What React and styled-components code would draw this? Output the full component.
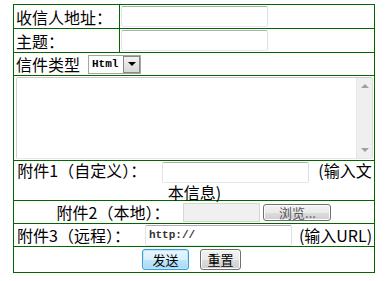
import React from "react";
import styled, { createGlobalStyle } from "styled-components";

const line = "#006600";

const GlobalStyle = createGlobalStyle`
  body {
    margin: 0;
    background: #fff;
    font-family: "Noto Sans CJK SC", sans-serif;
  }
`;

const Form = styled.form`
  box-sizing: border-box;
  width: 362px;
  margin: 4px 0 0 13px;
  border: 1px solid ${line};
  font-size: 16px;
  color: #000;
`;

const Row = styled.div`
  display: flex;
  align-items: center;
  justify-content: ${({ $center }) => ($center ? "center" : "flex-start")};
  height: ${({ $h }) => $h}px;
  border-top: ${({ $first }) => ($first ? "none" : `1px solid ${line}`)};
  padding: ${({ $pad }) => $pad || "0 2px"};
  white-space: nowrap;
`;

const LabelCell = styled.div`
  display: flex;
  align-items: center;
  width: 103px;
  height: 100%;
  padding-left: 2px;
  border-right: 1px solid ${line};
`;

const FieldCell = styled.div`
  display: flex;
  align-items: center;
  height: 100%;
  padding-left: 1px;
`;

const Input = styled.input`
  box-sizing: border-box;
  width: ${({ $w }) => $w || 147}px;
  height: 21px;
  margin: 0 ${({ $mr }) => $mr || 0}px 0 ${({ $ml }) => $ml || 0}px;
  padding: 1px 3px;
  border: 1px solid;
  border-color: #abadb3 #dbdfe6 #e3e9ef #e2e3ea;
  border-radius: 2px;
  background: #fff;
  font-family: "Liberation Mono", monospace;
  font-size: 11px;
  font-weight: bold;
  color: #333;
  vertical-align: middle;
  outline: none;
`;

const Hint = styled.span`
  margin-left: ${({ $ml }) => $ml || 0}px;
`;

const Select = styled.div`
  display: inline-flex;
  box-sizing: border-box;
  height: 19px;
  width: 53px;
  margin-left: 8px;
  border: 1px solid #a5a5a5;
  background: #fff;
`;

const SelectText = styled.span`
  flex: 1;
  padding-left: 3px;
  font-family: "Liberation Mono", monospace;
  font-size: 11px;
  font-weight: bold;
  line-height: 17px;
`;

const SelectArrow = styled.span`
  display: flex;
  align-items: center;
  justify-content: center;
  width: 15px;
  border: 1px solid #888;
  background: linear-gradient(#f2f2f2, #d8d8d8);

  &::after {
    content: "";
    border-left: 4px solid transparent;
    border-right: 4px solid transparent;
    border-top: 4px solid #000;
  }
`;

const AreaWrap = styled.div`
  display: flex;
  box-sizing: border-box;
  width: 357px;
  height: 82px;
  margin-left: 1px;
  border: 1px solid;
  border-color: #c9c9c9 #dcdcdc #e3e9ef #d0d0d0;
  border-radius: 2px;
`;

const Area = styled.textarea`
  flex: 1;
  border: none;
  resize: none;
  outline: none;
  padding: 2px;
  font-size: 13px;
`;

const Scroll = styled.div`
  display: flex;
  flex-direction: column;
  justify-content: space-between;
  align-items: center;
  width: 16px;
  padding: 6px 0;
  box-sizing: border-box;
  background: #efefef;
  border-left: 1px solid #e6e6e6;
`;

const Arrow = styled.span`
  border-left: 4px solid transparent;
  border-right: 4px solid transparent;
  ${({ $down }) =>
    $down ? "border-top: 4px solid #a0a0a0;" : "border-bottom: 4px solid #a0a0a0;"}
`;

const WrapRow = styled.div`
  height: 39px;
  border-top: 1px solid ${line};
  padding: 0 1px 0 2px;
  text-align: center;
  line-height: 19px;
`;

const FileBox = styled.span`
  display: inline-block;
  box-sizing: border-box;
  width: 77px;
  height: 19px;
  margin-left: 14px;
  border: 1px solid #d6d6d6;
  background: #f0f0f0;
`;

const Button = styled.button`
  box-sizing: border-box;
  height: ${({ $h }) => $h || 21}px;
  width: ${({ $w }) => $w}px;
  margin-left: ${({ $ml }) => $ml || 0}px;
  padding: 0;
  border: 1px solid ${({ $focus }) => ($focus ? "#3c9cd8" : "#707070")};
  border-radius: 3px;
  background: ${({ $focus }) =>
    $focus
      ? "linear-gradient(#e8f5fc 0%, #d9f0fc 50%, #bee6fd 51%, #a7d9f5 100%)"
      : "linear-gradient(#f2f2f2 0%, #ebebeb 50%, #dddddd 51%, #cfcfcf 100%)"};
  box-shadow: inset 0 0 0 1px ${({ $focus }) => ($focus ? "#bde6fb" : "#fcfcfc")};
  font-family: "Noto Sans CJK SC", sans-serif;
  font-size: 13px;
  line-height: 1;
  color: ${({ $muted }) => ($muted ? "#555" : "#000")};
`;

export default function App() {
  return (
    <>
      <GlobalStyle />
      <Form>
        <Row $first $h={23} $pad="0">
          <LabelCell>收信人地址：</LabelCell>
          <FieldCell>
            <Input />
          </FieldCell>
        </Row>
        <Row $h={23} $pad="0">
          <LabelCell>主题：</LabelCell>
          <FieldCell>
            <Input />
          </FieldCell>
        </Row>
        <Row $h={22}>
          信件类型
          <Select>
            <SelectText>Html</SelectText>
            <SelectArrow />
          </Select>
        </Row>
        <Row $h={84} $pad="0 1px">
          <AreaWrap>
            <Area />
            <Scroll>
              <Arrow />
              <Arrow $down />
            </Scroll>
          </AreaWrap>
        </Row>
        <WrapRow>
          附件1（自定义）：
          <Input $ml={16} $mr={9} />
          (输入文本信息)
        </WrapRow>
        <Row $h={22} $center>
          附件2（本地）：
          <FileBox />
          <Button $w={68} $h={17} $ml={3} $muted>
            浏览...
          </Button>
        </Row>
        <Row $h={22} $pad="0 1px 0 3px">
          附件3（远程）：
          <Input $ml={15} defaultValue="http://" />
          <Hint $ml={7}>(输入URL)</Hint>
        </Row>
        <Row $h={25} $center $pad="0 5px 0 0">
          <Button $w={47} $focus>
            发送
          </Button>
          <Button $w={41} $ml={11}>
            重置
          </Button>
        </Row>
      </Form>
    </>
  );
}
